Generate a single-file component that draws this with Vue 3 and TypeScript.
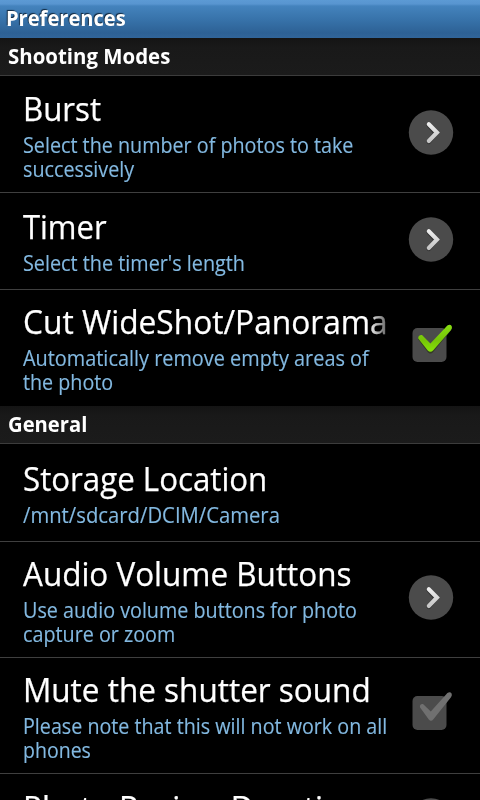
<script setup lang="ts">
interface Line {
  text: string
  scale: number
}
interface Pref {
  id: string
  title: Line
  summary: Line[]
  widget?: 'arrow' | 'checked' | 'disabled'
}
interface Section {
  heading: Line
  items: Pref[]
}

const line = (text: string, scale: number): Line => ({ text, scale })

const sections: Section[] = [
  {
    heading: line('Shooting Modes', 0.972),
    items: [
      {
        id: 'burst',
        title: line('Burst', 0.945),
        summary: [line('Select the number of photos to take', 0.94), line('successively', 0.94)],
        widget: 'arrow',
      },
      {
        id: 'timer',
        title: line('Timer', 0.938),
        summary: [line("Select the timer's length", 0.943)],
        widget: 'arrow',
      },
      {
        id: 'cut',
        title: line('Cut WideShot/Panorama', 0.96),
        summary: [line('Automatically remove empty areas of', 0.947), line('the photo', 0.938)],
        widget: 'checked',
      },
    ],
  },
  {
    heading: line('General', 0.962),
    items: [
      {
        id: 'storage',
        title: line('Storage Location', 0.947),
        summary: [line('/mnt/sdcard/DCIM/Camera', 0.965)],
      },
      {
        id: 'volume',
        title: line('Audio Volume Buttons', 0.953),
        summary: [line('Use audio volume buttons for photo', 0.94), line('capture or zoom', 0.94)],
        widget: 'arrow',
      },
      {
        id: 'mute',
        title: line('Mute the shutter sound', 0.954),
        summary: [line('Please note that this will not work on all', 0.938), line('phones', 0.93)],
        widget: 'disabled',
      },
      {
        id: 'review',
        title: line('Photo Review Duration', 0.96),
        summary: [],
        widget: 'arrow',
      },
    ],
  },
]

const fit = (l: Line) => ({ transform: `scaleX(${l.scale})` })
</script>

<template>
  <main class="screen">
    <header class="bar"><span class="fit" :style="{ transform: 'scaleX(0.957)' }">Preferences</span></header>
    <section v-for="s in sections" :key="s.heading.text">
      <h2 class="heading"><span class="fit" :style="fit(s.heading)">{{ s.heading.text }}</span></h2>
      <div v-for="p in s.items" :key="p.id" class="row" :class="p.id">
        <div class="text">
          <div class="title"><span class="fit" :style="fit(p.title)">{{ p.title.text }}</span></div>
          <div v-for="l in p.summary" :key="l.text" class="summary">
            <span class="fit" :style="fit(l)">{{ l.text }}</span>
          </div>
        </div>
        <svg v-if="p.widget" class="widget" viewBox="0 0 48 48" width="48" height="48" fill="none">
          <defs>
            <linearGradient id="silver" x1="0" y1="14" x2="0" y2="35" gradientUnits="userSpaceOnUse">
              <stop offset="0" stop-color="#f2f2f2" />
              <stop offset="1" stop-color="#c2c2c2" />
            </linearGradient>
            <linearGradient id="green" x1="0" y1="4" x2="0" y2="32" gradientUnits="userSpaceOnUse">
              <stop offset="0" stop-color="#86dc10" />
              <stop offset="0.5" stop-color="#76c408" />
              <stop offset="1" stop-color="#8bea08" />
            </linearGradient>
          </defs>
          <template v-if="p.widget === 'arrow'">
            <circle cx="24" cy="24.5" r="22.2" fill="#4b4b4b" />
            <path d="M21.8 17.2L29 25L21.8 33.7" stroke="#303030" stroke-width="4.6" stroke-linecap="round" stroke-linejoin="round" />
            <path d="M21.8 16.2L30 24.5L21.8 33" stroke="url(#silver)" stroke-width="4.1" stroke-linecap="round" stroke-linejoin="miter" />
          </template>
          <template v-else>
            <rect x="5.5" y="6" width="34" height="34" rx="5" fill="#4b4b4b" />
            <template v-if="p.widget === 'checked'">
              <path d="M11.2 17.6Q11 13.8 15 14L23.4 22.6L40.4 3.9Q43 2.2 44.6 4.2Q45.6 6 44 8.2L26 30.2Q23.4 33 20.8 30.2Z" fill="#343b26" />
              <path d="M11.2 16.6Q11 12.8 15 13L23.4 21.6L40.4 3.6Q43 1.9 44.6 3.9Q45.6 5.7 44 7.9L26 28.4Q23.4 31.2 20.8 28.4Z" fill="url(#green)" />
            </template>
            <path v-else d="M12.9 17.2Q12.7 13.6 16 14L23.8 21.6L40.4 3.1Q43 1.4 44.6 3.4Q45.4 5.2 44 7.2L26.2 29.6Q24 32 21.8 29.6Z" fill="#707070" />
          </template>
        </svg>
      </div>
    </section>
  </main>
</template>

<style>
body {
  margin: 0;
  background: #000;
}
</style>

<style scoped>
.screen {
  width: 480px;
  height: 800px;
  overflow: hidden;
  background: #000;
  color: #fff;
  font-family: "Open Sans", "Noto Sans", sans-serif;
}
.fit {
  display: inline-block;
  transform-origin: 0 50%;
  white-space: nowrap;
}
.bar {
  box-sizing: border-box;
  height: 38px;
  padding: 4px 0 0 6px;
  background: linear-gradient(#5c9ad4 0, #5895d0 4px, #4483bd 6px, #3772a9 20px, #2d6195 33px, #31659a 38px);
  font-size: 21px;
  font-weight: 700;
  line-height: 28px;
  text-shadow: -1px -1px 1px #10263c;
}
.heading {
  box-sizing: border-box;
  height: 38px;
  margin: 0;
  padding: 4px 0 0 8px;
  border-bottom: 1px solid #3c3c3c;
  background: linear-gradient(#141414, #191919 9px, #1b1b1b);
  font-size: 21px;
  font-weight: 700;
  line-height: 28px;
}
.row {
  display: flex;
  align-items: flex-start;
  box-sizing: border-box;
  height: 116px;
  padding: 12px 25px 0 23px;
  border-bottom: 1px solid #3f3f3f;
}
.text {
  flex: 1;
  min-width: 0;
}
.title {
  height: 44px;
  font-size: 33px;
  line-height: 39px;
  -webkit-text-stroke: 0.25px #fff;
}
.summary {
  height: 24px;
  color: #83b9e1;
  font-size: 21px;
  line-height: 24px;
  -webkit-text-stroke: 0.15px #83b9e1;
}
.widget {
  flex: none;
  margin-top: 19px;
}
.burst {
  height: 117px;
  padding-top: 13px;
}
.timer {
  height: 97px;
  padding-top: 14px;
}
.timer .widget,
.review .widget {
  margin-top: 8px;
}
.cut {
  border-bottom: 0;
}
.cut .widget,
.mute .widget {
  margin-top: 20px;
}
.cut .title {
  width: 364px;
  mask-image: linear-gradient(to right, #000 345px, transparent 376px);
}
.storage {
  height: 98px;
  padding-top: 15px;
}
.review {
  height: 97px;
  padding-top: 14px;
}
</style>
